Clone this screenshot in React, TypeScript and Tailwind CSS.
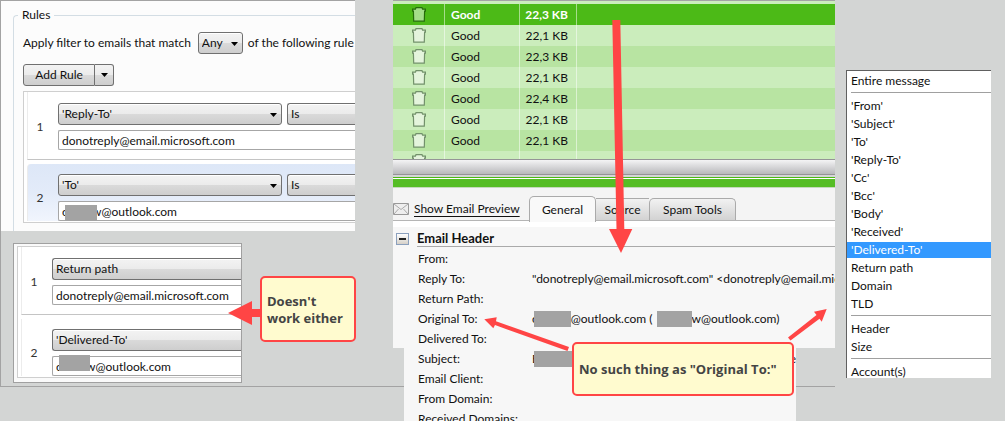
import type { ReactNode } from "react"
import clsx from "clsx"

type Option = { label: string; selected?: boolean }

const optionGroups: Option[][] = [
  [{ label: "Entire message" }],
  [
    { label: "'From'" },
    { label: "'Subject'" },
    { label: "'To'" },
    { label: "'Reply-To'" },
    { label: "'Cc'" },
    { label: "'Bcc'" },
    { label: "'Body'" },
    { label: "'Received'" },
    { label: "'Delivered-To'", selected: true },
    { label: "Return path" },
    { label: "Domain" },
    { label: "TLD" },
  ],
  [{ label: "Header" }, { label: "Size" }],
  [{ label: "Account(s)" }],
]

const sizes = ["22,3 KB", "22,1 KB", "22,3 KB", "22,1 KB", "22,4 KB", "22,1 KB", "22,1 KB"]

const controlBg =
  "bg-[linear-gradient(to_bottom,#f3f3f3,#ebebeb_50%,#dadada_50%,#cecece)] border-[#707070]"

function Caret({ className }: { className?: string }) {
  return (
    <svg viewBox="0 0 7 4" className={clsx("pointer-events-none h-1 w-[7px]", className)}>
      <path d="M0 0h7L3.5 4z" fill="#000" />
    </svg>
  )
}

type DropDownProps = {
  label: string
  value: string
  className?: string
  cut?: boolean
}

// `cut` drops the right edge for controls that run past their panel
function DropDown({ label, value, className, cut }: DropDownProps) {
  return (
    <div className={clsx("relative", className)}>
      <select
        aria-label={label}
        className={clsx(
          "block h-[22px] w-full appearance-none border pl-[3px] leading-5 shadow-[inset_0_1px_0_#fff]",
          controlBg,
          cut ? "rounded-l-[3px] border-r-0" : "rounded-[3px]",
        )}
      >
        <option>{value}</option>
      </select>
      {!cut && <Caret className="absolute top-[10px] right-[5px]" />}
    </div>
  )
}

type RuleRowProps = {
  index: number
  field: string
  value: string
  operator?: boolean
  active?: boolean
  redacted?: boolean
}

function RuleRow({ index, field, value, operator, active, redacted }: RuleRowProps) {
  const last = index === 2
  return (
    <li
      className={clsx(
        "flex items-center border-l border-l-[#ececec]",
        last ? "mt-1 pt-[10px]" : "border-b border-b-[#c4c4c4] pt-[11px] pb-[9px]",
        active && "rounded-tl-[4px] border-l-[#d2def0] bg-[linear-gradient(to_bottom,#dde7f7,#e3ebf9_50%,#f1f5fd)]",
      )}
    >
      <span className="w-[30px] shrink-0 pr-[6px] text-center text-[#333]">{index}</span>
      <div className="flex min-w-0 flex-1 flex-col gap-[5px]">
        <div className="flex gap-[5px]">
          <DropDown
            label={`Rule ${index} field`}
            value={field}
            cut={!operator}
            className={operator ? "w-56 shrink-0" : "flex-1"}
          />
          {operator && <DropDown label={`Rule ${index} operator`} value="Is" cut className="flex-1" />}
        </div>
        <div className="relative">
          <input
            aria-label={`Rule ${index} value`}
            defaultValue={value}
            className="block h-5 w-full rounded-l-[2px] border border-r-0 border-[#a6a6a6] bg-white pl-[3px] leading-[18px]"
          />
          {redacted && (
            <span
              className={clsx(
                "absolute left-[7px] h-4 bg-[#a3a3a3]",
                operator ? "top-1 w-8" : "-top-px w-[31px]",
              )}
            />
          )}
        </div>
      </div>
    </li>
  )
}

function RuleList({ children }: { children: ReactNode }) {
  return <ul className="border border-r-0 border-[#cfcfcf] bg-white pb-px pl-[3px]">{children}</ul>
}

function RulesPanel() {
  return (
    <div className="mr-[38px] overflow-hidden border-t border-[#a3a3a3] bg-[#fcfcfc] pt-[6px] pl-3">
      <fieldset className="min-w-0 rounded-tl-[4px] border border-r-0 border-b-0 border-[#d3dde4] pb-2 pl-[9px]">
        <legend className="-ml-[5px] px-1 leading-4">Rules</legend>
        <div className="mt-[9px] flex h-[22px] items-center whitespace-nowrap">
          <span>Apply filter to emails that match</span>
          <DropDown label="Match" value="Any" className="ml-[7px] w-[45px] shrink-0" />
          <span className="ml-[5px]">of the following rule</span>
        </div>
        <div className="mt-[10px] mb-[5px] flex">
          <button className={clsx("h-[22px] w-[72px] rounded-l-[3px] border leading-5", controlBg)}>
            Add Rule
          </button>
          <button
            aria-label="More rule types"
            className={clsx("flex h-[22px] w-[19px] items-center justify-center rounded-r-[3px] border border-l-0", controlBg)}
          >
            <Caret />
          </button>
        </div>
        <RuleList>
          <RuleRow index={1} field="'Reply-To'" value="donotreply@email.microsoft.com" operator />
          <RuleRow index={2} field="'To'" value="c        w@outlook.com" operator active redacted />
        </RuleList>
      </fieldset>
    </div>
  )
}

function Callout({ className, children }: { className: string; children: ReactNode }) {
  return (
    <div
      className={clsx(
        "absolute flex items-center rounded-[5px] border-2 border-[#ff4545] bg-[#fffbcf] px-[5px] pt-px font-['Open_Sans',sans-serif] text-[13px] leading-[17px] font-bold text-[#444]",
        className,
      )}
    >
      {children}
    </div>
  )
}

function FiltersColumn() {
  return (
    <section className="relative w-[393px] shrink-0 self-start border-b border-l border-[#a3a3a3] pb-[3px]">
      <RulesPanel />
      <div className="mt-3 ml-3 w-[229px] border border-[#a0a0a0] bg-[#fafafa] pt-[2px] pb-1 pl-[3px]">
        <RuleList>
          <RuleRow index={1} field="Return path" value="donotreply@email.microsoft.com" />
          <RuleRow index={2} field="'Delivered-To'" value="c        w@outlook.com" redacted />
        </RuleList>
      </div>
      <svg viewBox="0 0 34 24" className="absolute top-[301px] left-[227px] h-6 w-[34px]" fill="#ff4545">
        <path d="M0 12 24 0v8h10v8H24v8z" />
      </svg>
      <Callout className="top-[276px] left-[259px] h-[66px] w-24">
        Doesn't
        <br />
        work either
      </Callout>
    </section>
  )
}

function TrashIcon({ active }: { active?: boolean }) {
  return (
    <svg viewBox="0 0 14 15" className="mx-auto h-[15px] w-[14px]">
      <path
        d="M.6 2.200h2.800l.6-1.500h6l.6 1.500h2.800v2h-.8l-.3 10H1.700l-.3-10H.6z"
        fill={active ? "#a4de8a" : "#e4f4dc"}
        stroke={active ? "#256d0a" : "#72916a"}
        strokeWidth="1.200"
      />
    </svg>
  )
}

function MailTable() {
  return (
    <div className="h-[158px] overflow-hidden bg-[#cbedbc] pt-[3px]">
      <table className="w-full table-fixed border-separate border-spacing-0">
        <colgroup>
          <col className="w-[52px]" />
          <col className="w-[75px]" />
          <col className="w-[57px]" />
          <col />
        </colgroup>
        <tbody>
          {sizes.map((size, i) => (
            <tr
              key={i}
              className={clsx(
                "h-[21px]",
                i === 0 ? "bg-[#4cba17] font-bold text-white" : i % 2 ? "bg-[#cbedbc]" : "bg-[#b8e4a2]",
              )}
            >
              <td className="border-r border-white/50 p-0">
                <TrashIcon active={i === 0} />
              </td>
              <td className="border-r border-white/50 p-0 pl-[6px] leading-5">Good</td>
              <td className="border-r border-white/50 p-0 pr-2 text-right leading-5 whitespace-nowrap">{size}</td>
              <td className="p-0" />
            </tr>
          ))}
          <tr className="h-[21px]">
            <td className="border-r border-white/50 p-0">
              <TrashIcon />
            </td>
            <td className="border-r border-white/50 p-0" />
            <td className="border-r border-white/50 p-0" />
            <td className="p-0" />
          </tr>
        </tbody>
      </table>
    </div>
  )
}

function Redacted({ className }: { className: string }) {
  return <span className={clsx("relative h-4 shrink-0 bg-[#a3a3a3]", className)} />
}

function HeaderRow({ label, children }: { label: string; children?: ReactNode }) {
  return (
    <div className="flex h-5 items-center whitespace-nowrap">
      <dt className="w-[114px] shrink-0">{label}</dt>
      <dd className="flex min-w-0 flex-1 items-center">{children}</dd>
    </div>
  )
}

function PreviewTabs() {
  return (
    <div className="flex h-[33px] items-end border-b border-[#b5b5b5] bg-[#f4f4f4]">
      <a href="#preview" className="flex h-full flex-1 items-center gap-[5px] pt-[9px] whitespace-nowrap">
        <svg viewBox="0 0 16 12" className="h-3 w-4 shrink-0" fill="#eee" stroke="#999">
          <path d="M.5.5h15v11H.5z" />
          <path d="m1 1 7 5.500 7-5.500M1 11l4.500-5M15 11l-4.500-5" fill="none" stroke="#aaa" />
        </svg>
        <span className="underline underline-offset-[3px]">Show Email Preview</span>
      </a>
      <div role="tablist" className="flex items-end">
        <button
          role="tab"
          aria-selected="true"
          className="-mb-[2px] h-[26px] w-[67px] rounded-t-[5px] border border-b-0 border-[#aaa] bg-[#f9f9f9]"
        >
          General
        </button>
        <button
          role="tab"
          aria-selected="false"
          className="h-[22px] w-[53px] border-t border-[#aaa] bg-linear-to-b from-[#f2f2f2] to-[#d2d2d2]"
        >
          Source
        </button>
        <button
          role="tab"
          aria-selected="false"
          className="h-[22px] w-[87px] rounded-t-[5px] border border-b-0 border-[#aaa] bg-linear-to-b from-[#f2f2f2] to-[#d2d2d2]"
        >
          Spam Tools
        </button>
      </div>
      <div className="w-[99px]" />
    </div>
  )
}

function MailColumn() {
  return (
    <section className="relative min-w-0 flex-1 overflow-hidden border-t border-[#a3a3a3]">
      <MailTable />
      <div className="h-4 border-y border-[#959597] bg-linear-to-b from-[#f4f4f5] to-[#b9b9bc]" />
      <div className="h-[2px] bg-[#d5d5d7]" />
      <div className="h-[11px] border-t border-b border-t-[#4cba17] border-b-[#c5d9bd] bg-[#55bd25] shadow-[inset_0_1px_0_#fff]" />
      <PreviewTabs />
      <div className="border-t-[6px] border-white bg-[#f7f7f7]">
        <div className="flex h-[22px] items-start pl-[3px]">
          <button
            aria-label="Collapse email header"
            className="mt-[6px] mr-2 flex h-3 w-[13px] shrink-0 items-center justify-center border border-[#8ba0bd] bg-linear-to-b from-white to-[#d5d0c8]"
          >
            <span className="h-[2px] w-[7px] bg-[#222]" />
          </button>
          <h2 className="flex-1 border-b border-[#aaa] pt-[3px] text-[13px] leading-4 font-bold">Email Header</h2>
        </div>
        <dl className="h-[99px] overflow-hidden pl-[25px]">
          <HeaderRow label="From:" />
          <HeaderRow label="Reply To:">
            "donotreply@email.microsoft.com" &lt;donotreply@email.microsoft.com&gt;
          </HeaderRow>
          <HeaderRow label="Return Path:" />
          <HeaderRow label="Original To:">
            <span>c</span>
            <Redacted className="-ml-[4px] w-[37px]" />
            @outlook.com (
            <Redacted className="ml-1 w-[35px]" />
            w@outlook.com)
          </HeaderRow>
          <HeaderRow label="Delivered To:" />
        </dl>
      </div>
      <div className="flex h-[73px] items-start">
        <div className="h-[39px] w-[11px] border-b border-[#a3a3a3]" />
        <dl className="h-full flex-1 overflow-hidden bg-[#f7f7f7] pt-px pl-[14px]">
          <HeaderRow label="Subject:">
            <span>E</span>
            <Redacted className="-ml-[5px] w-[70px]" />
            <span className="ml-auto">e</span>
          </HeaderRow>
          <HeaderRow label="Email Client:" />
          <HeaderRow label="From Domain:" />
          <HeaderRow label="Received Domains:" />
        </dl>
        <div className="h-[39px] w-[39px] border-b border-[#a3a3a3]" />
      </div>

      <svg viewBox="393 0 442 421" className="pointer-events-none absolute -top-px left-0 h-[421px] w-[442px]" fill="#ff4545">
        <path d="M612.300 20h8l4 209h8L621 253l-12-24h7.500z" />
        <path d="M484.300 319.300 496.700 317.300 496 321.300 569 347 567.500 351 495 325 493.300 328.300z" />
        <path d="M826.700 309 821.700 321.700 819.500 318.700 790.500 340.500 788 337.500 816.500 315 814 311.700z" />
      </svg>
      <Callout className="top-[341px] left-[179px] h-[54px] w-[222px]">No such thing as "Original To:"</Callout>
    </section>
  )
}

function FieldMenu() {
  return (
    <div
      role="listbox"
      aria-label="Rule field"
      className="mt-[70px] mr-[14px] ml-[11px] h-[308px] w-[145px] shrink-0 overflow-hidden border-t border-l border-[#606060] bg-white pt-[2px]"
    >
      {optionGroups.map((group, i) => (
        <div key={i} className="flex flex-col gap-[2px]">
          {i > 0 && <hr className="mt-[3px] mb-[3px] ml-1 border-[#a0a0a0]" />}
          {group.map(({ label, selected }) => (
            <div
              key={label}
              role="option"
              aria-selected={!!selected}
              className={clsx("h-4 pl-1 leading-4", selected && "bg-[#3399ff] text-white")}
            >
              {label}
            </div>
          ))}
        </div>
      ))}
    </div>
  )
}

export default function App() {
  return (
    <main className="flex min-h-screen items-start bg-[#d3d5d4] font-[Lato,'Open_Sans',sans-serif] text-[12px] leading-4 text-[#111]">
      <FiltersColumn />
      <MailColumn />
      <FieldMenu />
    </main>
  )
}
